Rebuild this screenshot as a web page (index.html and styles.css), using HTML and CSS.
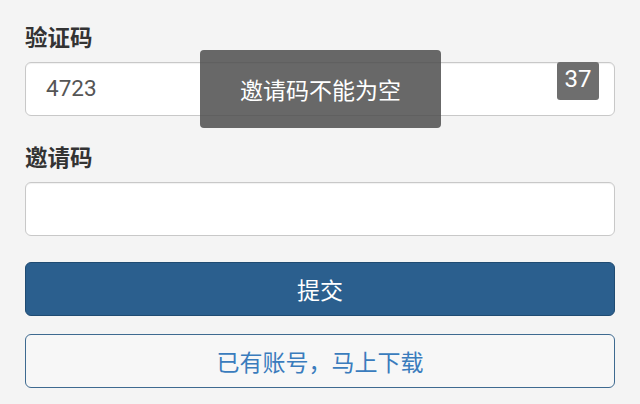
FILE: index.html
```html
<!DOCTYPE html>
<html lang="zh-CN">
<head>
<meta charset="utf-8">
<title>注册</title>
<link rel="stylesheet" href="styles.css">
</head>
<body>
<form class="form">
  <div class="group">
    <label class="label">验证码</label>
    <div class="field">
      <div class="input">4723</div>
      <span class="badge">37</span>
    </div>
  </div>
  <div class="group">
    <label class="label">邀请码</label>
    <div class="field">
      <div class="input"></div>
    </div>
  </div>
  <button type="button" class="btn btn-primary">提交</button>
  <button type="button" class="btn btn-outline">已有账号，马上下载</button>
</form>
<div class="toast">邀请码不能为空</div>
</body>
</html>
```

FILE: styles.css
```css
html, body {
  margin: 0;
  padding: 0;
  background: #f4f4f4;
}
body {
  font-family: Roboto, "Noto Sans CJK SC", "Noto Sans", sans-serif;
  width: 640px;
  height: 404px;
  overflow: hidden;
  position: relative;
}
.form {
  padding: 21px 25px 0 25px;
  display: flex;
  flex-direction: column;
}
.group {
  display: flex;
  flex-direction: column;
  margin-bottom: 25px;
}
.group + .group {
  margin-bottom: 26px;
}
.label {
  font-family: "Noto Sans CJK SC", sans-serif;
  font-weight: 700;
  font-size: 22.5px;
  line-height: 30px;
  color: #333;
  margin-bottom: 11px;
}
.field {
  position: relative;
}
.input {
  box-sizing: border-box;
  height: 54px;
  background: #fff;
  border: 1.5px solid #c8c8c8;
  border-radius: 6px;
  padding: 0 20px;
  font-size: 22.5px;
  line-height: 51px;
  color: #555;
  box-shadow: inset 0 1px 1px rgba(0,0,0,0.06);
}
.badge {
  position: absolute;
  top: 0;
  right: 16px;
  width: 42px;
  height: 38px;
  background: #6e6e6e;
  color: #fff;
  font-size: 24px;
  line-height: 34px;
  text-align: center;
  border-radius: 3px;
}
.btn {
  box-sizing: border-box;
  height: 54px;
  width: 100%;
  border-radius: 6px;
  font-family: "Noto Sans CJK SC", sans-serif;
  font-size: 23px;
  padding: 0;
  display: flex;
  align-items: center;
  justify-content: center;
}
.btn-primary {
  background: #2b5f8e;
  border: 1.5px solid #1f4b72;
  color: #fff;
  margin-bottom: 18px;
}
.btn-outline {
  background: #f7f7f7;
  border: 1.5px solid #3e6a90;
  color: #3a7cbd;
}
.toast {
  position: absolute;
  left: 200px;
  top: 50px;
  width: 241px;
  height: 78px;
  background: rgba(78, 78, 78, 0.85);
  border-radius: 4px;
  color: #fff;
  font-family: "Noto Sans CJK SC", sans-serif;
  font-size: 23px;
  display: flex;
  align-items: center;
  justify-content: center;
}
```
